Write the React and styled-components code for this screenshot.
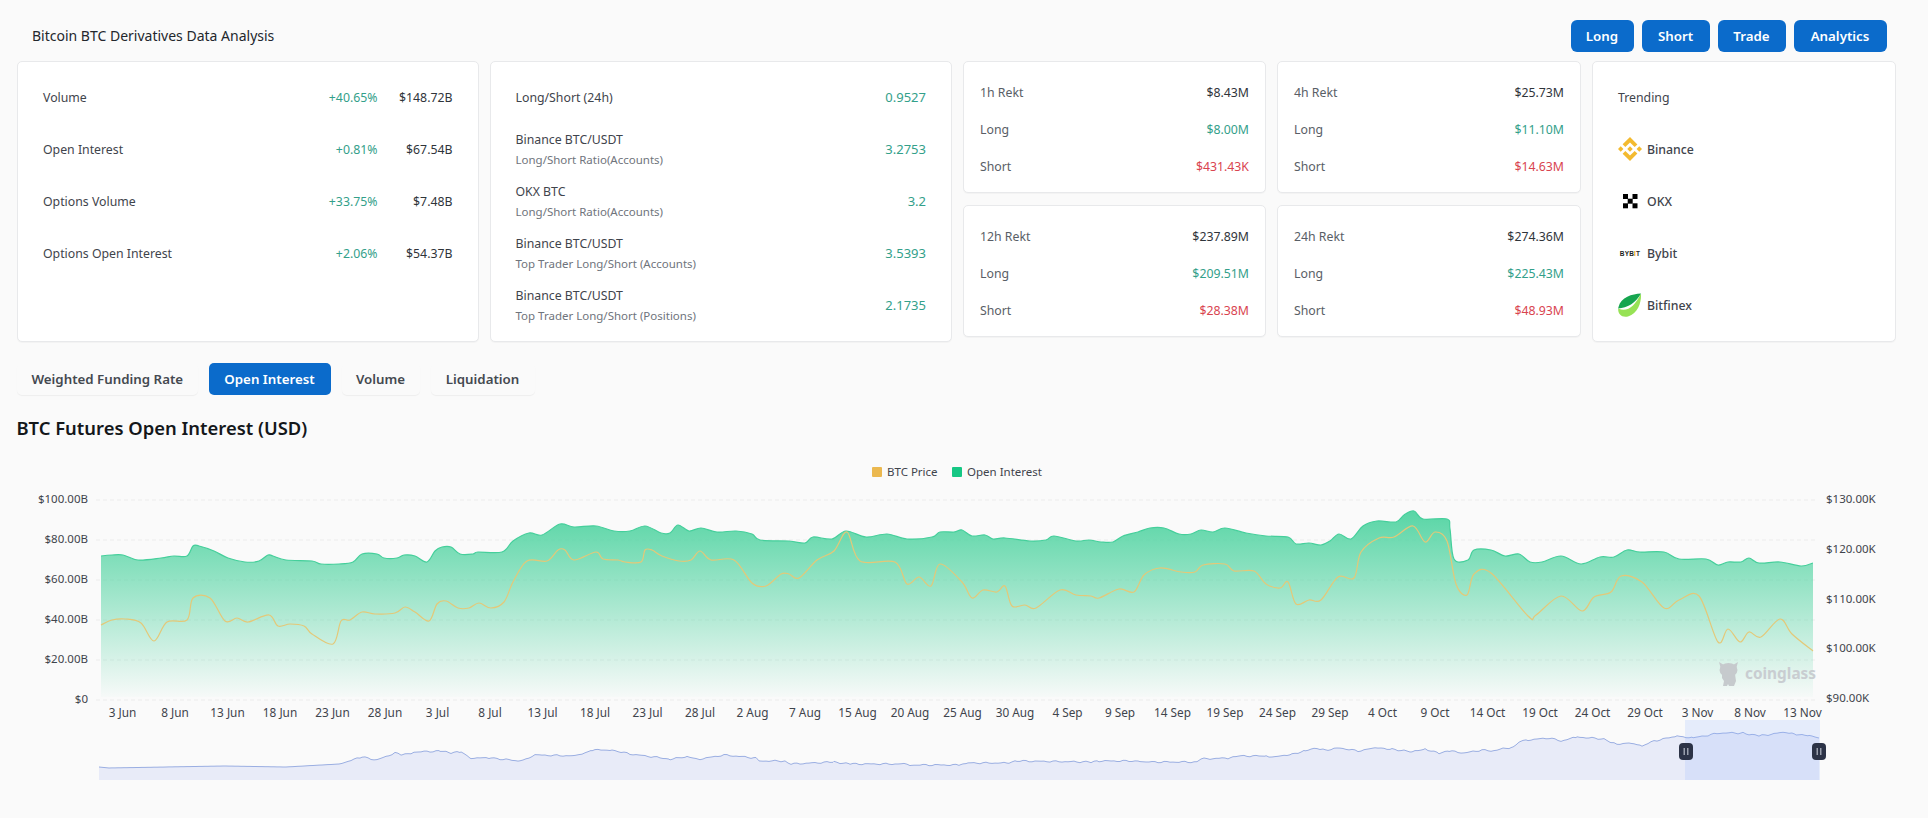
import styled, { createGlobalStyle } from 'styled-components';

const GlobalStyle = createGlobalStyle`
  body {
    margin: 0;
    background: #fafafa;
    font-family: 'Noto Sans', 'Liberation Sans', sans-serif;
    color: #3f444c;
  }
`;

// chart curves, read off the picture: x, y in page pixels
const interest = [[101,557],[112,556],[123,556],[138,561],[161,559],[174,557],[187,557],[193,547],[199,547],[214,552],[228,559],[245,563],[259,562],[268,556],[273,557],[286,561],[312,562],[321,565],[339,565],[353,563],[362,555],[377,555],[384,559],[397,559],[404,556],[415,557],[427,563],[435,552],[442,548],[451,548],[460,555],[473,555],[478,553],[502,553],[513,542],[529,534],[542,536],[560,525],[574,528],[596,527],[614,532],[630,532],[645,527],[661,534],[670,534],[678,526],[689,532],[701,529],[717,533],[736,532],[752,535],[760,541],[789,542],[805,544],[813,538],[832,540],[846,532],[866,538],[887,535],[907,540],[932,538],[940,533],[954,533],[962,531],[972,537],[985,536],[993,540],[1005,539],[1030,542],[1046,541],[1054,537],[1076,542],[1089,541],[1101,543],[1113,543],[1123,537],[1138,533],[1150,529],[1164,529],[1179,535],[1191,535],[1201,531],[1213,533],[1225,529],[1246,534],[1266,537],[1288,538],[1296,545],[1309,544],[1321,546],[1330,542],[1339,535],[1351,540],[1363,527],[1377,522],[1396,523],[1404,516],[1414,512],[1423,520],[1447,520],[1450,530],[1454,560],[1468,561],[1474,551],[1491,551],[1505,557],[1519,555],[1530,563],[1542,563],[1561,557],[1581,565],[1600,558],[1614,558],[1627,551],[1640,553],[1664,553],[1679,560],[1706,560],[1718,566],[1728,563],[1741,563],[1749,559],[1759,564],[1780,563],[1801,567],[1813,564]];

const price = [[101,626],[112,621],[125,620],[141,624],[154,642],[167,623],[187,621],[193,599],[210,599],[225,622],[237,619],[248,623],[269,616],[278,627],[290,625],[304,627],[312,635],[333,645],[341,622],[350,621],[362,613],[375,615],[395,614],[405,608],[415,613],[429,622],[437,605],[446,602],[458,609],[469,609],[479,604],[491,609],[504,603],[513,583],[527,562],[547,562],[558,551],[565,551],[574,561],[596,553],[603,560],[618,561],[625,563],[641,563],[645,551],[652,551],[662,557],[679,562],[691,561],[700,552],[711,561],[734,561],[752,584],[766,587],[781,575],[789,575],[799,579],[817,561],[834,552],[847,533],[860,562],[895,563],[907,585],[919,578],[931,587],[940,565],[962,583],[972,599],[983,591],[997,593],[1005,587],[1012,607],[1025,606],[1036,609],[1060,591],[1076,596],[1091,597],[1099,599],[1119,590],[1134,593],[1144,576],[1160,569],[1181,573],[1195,573],[1203,566],[1225,565],[1234,572],[1254,572],[1266,585],[1280,589],[1288,583],[1296,605],[1309,601],[1321,601],[1338,578],[1354,579],[1361,553],[1379,539],[1394,538],[1413,527],[1425,543],[1435,533],[1447,542],[1456,585],[1467,596],[1474,575],[1491,574],[1528,617],[1536,616],[1561,597],[1582,612],[1594,598],[1611,593],[1621,577],[1642,583],[1664,609],[1679,601],[1699,597],[1718,643],[1728,630],[1740,643],[1749,633],[1761,638],[1780,620],[1792,635],[1813,652]];

const overview = [[99,768],[109,769],[223,767],[286,768],[339,765],[362,758],[377,761],[395,754],[402,756],[415,753],[440,752],[451,754],[461,753],[471,759],[491,759],[520,762],[536,756],[576,757],[592,751],[612,751],[630,755],[670,760],[687,758],[700,760],[724,756],[756,759],[760,762],[785,762],[791,765],[834,763],[850,765],[907,765],[911,766],[960,766],[968,764],[1009,764],[1017,762],[1091,763],[1099,762],[1140,762],[1146,763],[1197,763],[1201,760],[1230,759],[1238,757],[1266,757],[1275,758],[1292,755],[1305,752],[1317,749],[1325,751],[1340,749],[1358,752],[1375,749],[1392,750],[1412,753],[1425,750],[1439,754],[1449,752],[1464,754],[1482,751],[1491,752],[1513,748],[1520,742],[1528,741],[1549,739],[1561,742],[1577,738],[1604,740],[1611,744],[1617,745],[1631,744],[1642,747],[1654,742],[1677,737],[1693,739],[1720,734],[1743,734],[1759,737],[1786,733],[1796,736],[1809,736],[1819,739]];

const smoothPath = (pts) => {
  let d = `M${pts[0][0]} ${pts[0][1]}`;
  for (let i = 0; i < pts.length - 1; i++) {
    const p0 = pts[i - 1] || pts[i];
    const p1 = pts[i];
    const p2 = pts[i + 1];
    const p3 = pts[i + 2] || p2;
    const c1x = p1[0] + (p2[0] - p0[0]) / 6;
    const c1y = p1[1] + (p2[1] - p0[1]) / 6;
    const c2x = p2[0] - (p3[0] - p1[0]) / 6;
    const c2y = p2[1] - (p3[1] - p1[1]) / 6;
    d += ` C${c1x.toFixed(1)} ${c1y.toFixed(1)} ${c2x.toFixed(1)} ${c2y.toFixed(1)} ${p2[0]} ${p2[1]}`;
  }
  return d;
};

// the overview line is a bit noisy, sample it every 3px and shake it
const noisyPath = (pts) => {
  const out = [];
  for (let i = 0; i < pts.length - 1; i++) {
    const [x1, y1] = pts[i];
    const [x2, y2] = pts[i + 1];
    for (let x = x1; x < x2; x += 3) {
      const y = y1 + ((y2 - y1) * (x - x1)) / (x2 - x1);
      const shake = x > 340 ? Math.sin(x * 1.7) * 0.5 + Math.sin(x * 0.63) * 0.4 : 0;
      out.push(`${x} ${(y + shake).toFixed(1)}`);
    }
  }
  out.push(`${pts[pts.length - 1][0]} ${pts[pts.length - 1][1]}`);
  return 'M' + out.join(' L');
};

const dates = ['3 Jun','8 Jun','13 Jun','18 Jun','23 Jun','28 Jun','3 Jul','8 Jul','13 Jul','18 Jul','23 Jul','28 Jul','2 Aug','7 Aug','15 Aug','20 Aug','25 Aug','30 Aug','4 Sep','9 Sep','14 Sep','19 Sep','24 Sep','29 Sep','4 Oct','9 Oct','14 Oct','19 Oct','24 Oct','29 Oct','3 Nov','8 Nov','13 Nov'];
const leftAxis = ['$100.00B','$80.00B','$60.00B','$40.00B','$20.00B','$0'];
const rightAxis = [['$130.00K',504],['$120.00K',554],['$110.00K',604],['$100.00K',653],['$90.00K',703]];

const volumes = [
  { label: 'Volume', pct: '+40.65%', value: '$148.72B' },
  { label: 'Open Interest', pct: '+0.81%', value: '$67.54B' },
  { label: 'Options Volume', pct: '+33.75%', value: '$7.48B' },
  { label: 'Options Open Interest', pct: '+2.06%', value: '$54.37B' },
];

const ratios = [
  { label: 'Long/Short (24h)', value: '0.9527' },
  { label: 'Binance BTC/USDT', sub: 'Long/Short Ratio(Accounts)', value: '3.2753' },
  { label: 'OKX BTC', sub: 'Long/Short Ratio(Accounts)', value: '3.2' },
  { label: 'Binance BTC/USDT', sub: 'Top Trader Long/Short (Accounts)', value: '3.5393' },
  { label: 'Binance BTC/USDT', sub: 'Top Trader Long/Short (Positions)', value: '2.1735' },
];

const rekts = [
  { name: '1h Rekt', total: '$8.43M', long: '$8.00M', short: '$431.43K' },
  { name: '4h Rekt', total: '$25.73M', long: '$11.10M', short: '$14.63M' },
  { name: '12h Rekt', total: '$237.89M', long: '$209.51M', short: '$28.38M' },
  { name: '24h Rekt', total: '$274.36M', long: '$225.43M', short: '$48.93M' },
];

const BinanceLogo = () => (
  <svg width="24" height="24" viewBox="0 0 126.61 126.61" fill="#f3ba2f">
    <path d="M38.73 53.2l24.59-24.58 24.6 24.6 14.3-14.31L63.32 0 24.43 38.9z" />
    <path d="M0 63.31l14.3-14.31 14.31 14.31-14.31 14.3z" />
    <path d="M38.73 73.41l24.59 24.59 24.6-24.6 14.31 14.29-38.9 38.91-38.91-38.88z" />
    <path d="M98 63.31l14.3-14.31 14.31 14.3-14.31 14.32z" />
    <path d="M77.83 63.3L63.32 48.78 52.59 59.51l-1.24 1.23-2.54 2.54 14.51 14.5 14.51-14.47z" />
  </svg>
);

const OkxLogo = () => (
  <svg width="24" height="24" viewBox="0 0 24 24" fill="#000">
    <rect x="5" y="5" width="5" height="5" />
    <rect x="14.5" y="5" width="5" height="5" />
    <rect x="9.7" y="9.7" width="5" height="5" />
    <rect x="5" y="14.3" width="5" height="5" />
    <rect x="14.5" y="14.3" width="5" height="5" />
  </svg>
);

const BitfinexLogo = () => (
  <svg width="24" height="24" viewBox="0 0 24 24">
    <path d="M23 0.5C23.5 9 20.5 20 10 23.5C3 25 -0.5 20 0.3 15.5C9 20 17 13 23 0.5Z" fill="#97e255" />
    <path d="M23 0.5C14 1 3 4 0.5 14C0.2 15 0.2 15.5 0.3 15.5C9 15 18 10 23 0.5Z" fill="#16a54f" />
  </svg>
);

const Page = styled.div`
  width: 1879px;
  padding: 20px 0 14px 17px;
`;

const Header = styled.header`
  display: flex;
  align-items: center;
  justify-content: space-between;
  padding: 0 9.5px 0 15px;
  height: 32px;
`;

const Title = styled.h1`
  margin: 0 0 1px;
  font-size: 14px;
  font-weight: 400;
  color: #23272d;
`;

const ButtonBar = styled.div`
  display: grid;
  grid-template-columns: 63px 68px 68px 93px;
  gap: 8px;
`;

const ActionButton = styled.button`
  height: 32px;
  padding: 0;
  border: 0;
  border-radius: 6px;
  background: #0b6bcb;
  color: #fff;
  font: 600 13.3px 'Noto Sans', sans-serif;
`;

const CardGrid = styled.section`
  display: grid;
  grid-template-columns: 461.5px 462.5px 303px 304px 304px;
  gap: 11px;
  margin-top: 9px;
  align-items: start;
`;

const Card = styled.div`
  box-sizing: border-box;
  background: #fff;
  border: 1px solid #e8e9eb;
  border-radius: 5px;
  box-shadow: 0 1px 1px rgba(0, 0, 0, 0.03);
`;

const TallCard = styled(Card)`
  height: 281px;
  padding: 9px 25px;
`;

const RektColumn = styled.div`
  display: grid;
  grid-template-columns: 303px 304px;
  grid-column: span 2;
  gap: 11.5px 11px;
`;

const RektCard = styled(Card)`
  height: 132px;
  padding: 12px 16px 0;
`;

const StatRow = styled.div`
  display: grid;
  grid-template-columns: 1fr auto 75px;
  align-items: center;
  height: 52px;
  font-size: 12.3px;
`;

const RatioRow = styled.div`
  display: flex;
  align-items: center;
  justify-content: space-between;
  height: 52px;
  font-size: 12.3px;
`;

const RatioName = styled.div`
  display: flex;
  flex-direction: column;
  gap: 3px;
  line-height: 17px;
`;

const Sub = styled.span`
  font-size: 11.5px;
  color: #6f747c;
`;

const Num = styled.span`
  text-align: right;
  color: ${(p) => (p.$tone === 'up' ? '#33a08a' : p.$tone === 'down' ? '#d9444f' : '#2f343a')};
`;

const RatioNum = styled(Num)`
  font-size: 13px;
`;

const RektRow = styled.div`
  display: flex;
  align-items: center;
  justify-content: space-between;
  height: 37px;
  font-size: 12.3px;
`;

const Muted = styled.span`
  color: #595e66;
`;

const BrandRow = styled.div`
  display: flex;
  align-items: center;
  gap: 5px;
  height: 52px;
  font-size: 12.3px;
  font-weight: 500;
`;

const BrandIcon = styled.span`
  display: flex;
  align-items: center;
  justify-content: center;
  width: 24px;
  height: 24px;
`;

const BybitMark = styled.span`
  font: 800 6.5px 'Liberation Sans', sans-serif;
  color: #1c1f24;
  letter-spacing: 0.2px;
  b {
    color: #f7a600;
  }
`;

const Tabs = styled.nav`
  display: grid;
  grid-template-columns: 180.5px 122px 78px 104px;
  gap: 11px;
  margin-top: 21px;
`;

const Tab = styled.button`
  height: 32px;
  padding: 0 0 1px;
  border: 0;
  border-radius: 5px;
  background: ${(p) => (p.$active ? '#0b6bcb' : 'transparent')};
  color: ${(p) => (p.$active ? '#fff' : '#444950')};
  box-shadow: ${(p) => (p.$active ? 'none' : '0 1px 1px rgba(0, 0, 0, 0.05)')};
  font: 600 13.3px 'Noto Sans', sans-serif;
`;

const Heading = styled.h2`
  margin: 21px 0 0 -0.5px;
  font-size: 18.4px;
  line-height: 24px;
  font-weight: 600;
  color: #14171a;
`;

const ChartSvg = styled.svg`
  display: block;
  margin-top: 19px;
  font-family: 'Noto Sans', sans-serif;
  font-size: 11.5px;
  fill: #3f444c;
`;

const DateLabel = styled.text`
  font-size: 11.8px;
`;

const OpenInterestChart = () => {
  const line = smoothPath(interest);
  const ov = noisyPath(overview);
  return (
    <ChartSvg width="1879" height="344" viewBox="17 460 1879 344">
      <defs>
        <linearGradient id="oiFill" gradientUnits="userSpaceOnUse" x1="0" y1="510" x2="0" y2="698">
          <stop offset="0" stopColor="#4ed3a0" stopOpacity="0.95" />
          <stop offset="1" stopColor="#4ed3a0" stopOpacity="0.02" />
        </linearGradient>
      </defs>

      <rect x="872" y="468" width="10" height="10" rx="1" fill="#ebb84f" />
      <text x="887" y="477">BTC Price</text>
      <rect x="952" y="468" width="10" height="10" rx="1" fill="#16c784" />
      <text x="967" y="477">Open Interest</text>

      {leftAxis.map((label, i) => (
        <g key={label}>
          <line x1="96" x2="1816" y1={501 + i * 40} y2={501 + i * 40} stroke="#ececec" strokeDasharray="4 3" />
          <text x="88" y={504 + i * 40} textAnchor="end">{label}</text>
        </g>
      ))}
      {rightAxis.map(([label, y]) => (
        <text key={label} x="1826" y={y}>{label}</text>
      ))}

      <path d={`${line} L1813 698 L101 698 Z`} fill="url(#oiFill)" />
      <path d={line} fill="none" stroke="#45cf9b" strokeWidth="1.2" />
      <path d={smoothPath(price)} fill="none" stroke="#e4c878" strokeWidth="1.2" />

      <g fill="#c6cacd">
        <ellipse cx="1728.5" cy="671" rx="9" ry="7" />
        <path d="M1719 663 l5 3 -3 4z M1738 663 l-5 3 3 4z" />
        <path d="M1722 675 h13 l1 7 -2 5 h-5 l-1 -2 -1 2 h-4 l1 -5 -2 -3z" />
      </g>
      <text x="1745" y="680" fontSize="16" fontWeight="700" fill="#c9cdd1" textLength="71" lengthAdjust="spacingAndGlyphs">coinglass</text>

      {dates.map((d, i) => (
        <DateLabel key={d} x={122.5 + i * 52.5} y="718" textAnchor="middle">{d}</DateLabel>
      ))}

      <path d={`${ov} L1819 781 L99 781 Z`} fill="#e8ebf8" />
      <path d={ov} fill="none" stroke="#9aaee2" strokeWidth="1" />
      <rect x="1685" y="721" width="135" height="60" fill="#9db9ff" fillOpacity="0.22" />
      {[1686, 1819].map((x) => (
        <g key={x}>
          <rect x={x - 7} y="744" width="14" height="17" rx="4" fill="#2c3347" />
          <rect x={x - 2.5} y="749" width="1.5" height="7" fill="#9aa0ad" />
          <rect x={x + 1} y="749" width="1.5" height="7" fill="#9aa0ad" />
        </g>
      ))}
    </ChartSvg>
  );
};

const App = () => {
  return (
    <Page>
      <GlobalStyle />
      <Header>
        <Title>Bitcoin BTC Derivatives Data Analysis</Title>
        <ButtonBar>
          {['Long', 'Short', 'Trade', 'Analytics'].map((name) => (
            <ActionButton key={name}>{name}</ActionButton>
          ))}
        </ButtonBar>
      </Header>

      <CardGrid>
        <TallCard>
          {volumes.map((row) => (
            <StatRow key={row.label}>
              <span>{row.label}</span>
              <Num $tone="up">{row.pct}</Num>
              <Num>{row.value}</Num>
            </StatRow>
          ))}
        </TallCard>

        <TallCard>
          {ratios.map((row) => (
            <RatioRow key={row.sub || row.label}>
              <RatioName>
                <span>{row.label}</span>
                {row.sub && <Sub>{row.sub}</Sub>}
              </RatioName>
              <RatioNum $tone="up">{row.value}</RatioNum>
            </RatioRow>
          ))}
        </TallCard>

        <RektColumn>
          {rekts.map((card) => (
            <RektCard key={card.name}>
              <RektRow>
                <Muted>{card.name}</Muted>
                <Num>{card.total}</Num>
              </RektRow>
              <RektRow>
                <Muted>Long</Muted>
                <Num $tone="up">{card.long}</Num>
              </RektRow>
              <RektRow>
                <Muted>Short</Muted>
                <Num $tone="down">{card.short}</Num>
              </RektRow>
            </RektCard>
          ))}
        </RektColumn>

        <TallCard>
          <RatioRow>Trending</RatioRow>
          <BrandRow><BrandIcon><BinanceLogo /></BrandIcon>Binance</BrandRow>
          <BrandRow><BrandIcon><OkxLogo /></BrandIcon>OKX</BrandRow>
          <BrandRow><BrandIcon><BybitMark>BYB<b>I</b>T</BybitMark></BrandIcon>Bybit</BrandRow>
          <BrandRow><BrandIcon><BitfinexLogo /></BrandIcon>Bitfinex</BrandRow>
        </TallCard>
      </CardGrid>

      <Tabs>
        <Tab>Weighted Funding Rate</Tab>
        <Tab $active>Open Interest</Tab>
        <Tab>Volume</Tab>
        <Tab>Liquidation</Tab>
      </Tabs>

      <Heading>BTC Futures Open Interest (USD)</Heading>
      <OpenInterestChart />
    </Page>
  );
};

export default App;
